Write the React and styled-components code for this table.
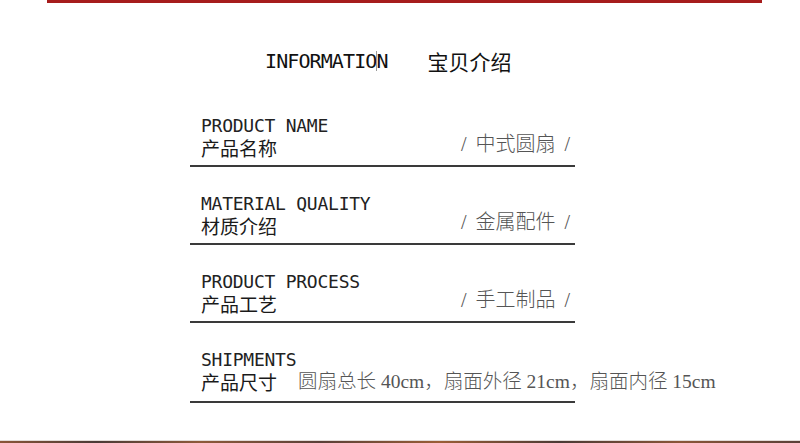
import React from "react";
import styled, { createGlobalStyle } from "styled-components";

const Global = createGlobalStyle`
  html, body { margin: 0; padding: 0; background: #fff; }
  body { overflow: hidden; }
`;

const Page = styled.div`
  width: 800px;
  height: 443px;
  display: flex;
  flex-direction: column;
  background: #fff;
`;

const TopBar = styled.div`
  height: 3px;
  margin: 0 38px 0 47px;
  background: #a61c1c;
`;

const Header = styled.div`
  margin-top: 44px;
  height: 28px;
  padding-left: 265px;
  display: flex;
  align-items: center;
  gap: 40px;
`;

const HeaderEn = styled.span`
  font-family: "DejaVu Sans Mono", "Liberation Mono", monospace;
  font-size: 20px;
  line-height: 28px;
  letter-spacing: -0.9px;
  color: #111;
`;

const Caret = styled.span`
  display: inline-block;
  width: 1px;
  height: 20px;
  margin-right: -1px;
  vertical-align: -3px;
  background: #9a9a9a;
`;

const HeaderCn = styled.span`
  font-family: "Noto Sans CJK SC", sans-serif;
  font-size: 21px;
  line-height: 28px;
  color: #111;
`;

const List = styled.div`
  margin-top: 14px;
  margin-left: 190px;
  width: 385px;
  display: flex;
  flex-direction: column;
`;

const Row = styled.div`
  padding-top: 27px;
  padding-bottom: ${(p) => (p.$last ? 8 : 6)}px;
  border-bottom: 2px solid #3a3a3a;
`;

const EnLabel = styled.div`
  padding-left: 11px;
  font-family: "DejaVu Sans Mono", "Liberation Mono", monospace;
  font-size: 18px;
  line-height: 20px;
  letter-spacing: -0.25px;
  color: #222;
`;

const CnLine = styled.div`
  display: flex;
  align-items: flex-end;
  justify-content: ${(p) => (p.$inline ? "flex-start" : "space-between")};
  gap: ${(p) => (p.$inline ? 21 : 0)}px;
  height: 23px;
  padding: 0 5px 0 11px;
  white-space: nowrap;
`;

const CnLabel = styled.span`
  font-family: "Noto Sans CJK SC", sans-serif;
  font-size: 19px;
  line-height: 23px;
  color: #1a1a1a;
`;

const Value = styled.span`
  align-self: ${(p) => (p.$inline ? "flex-end" : "flex-start")};
  font-family: "Liberation Serif", "Noto Sans CJK SC", serif;
  font-weight: 300;
  font-size: ${(p) => (p.$inline ? 19.5 : 20)}px;
  line-height: ${(p) => (p.$inline ? 23 : 16)}px;
  word-spacing: ${(p) => (p.$inline ? 0 : 4)}px;
  color: #555;
  white-space: pre;
`;

const Footer = styled.div`
  margin-top: auto;
  border-top: 1px solid #e2dcd8;
  height: 2px;
  background: linear-gradient(
    90deg,
    #8a5638 0%,
    #4a3a36 12%,
    #8d5a3a 25%,
    #5a4038 40%,
    #9a5e36 55%,
    #4b3a35 70%,
    #8a5638 85%,
    #5a4038 100%
  );
`;

const rows = [
  { en: "PRODUCT NAME", cn: "产品名称", value: "/ 中式圆扇 /" },
  { en: "MATERIAL QUALITY", cn: "材质介绍", value: "/ 金属配件 /" },
  { en: "PRODUCT PROCESS", cn: "产品工艺", value: "/ 手工制品 /" },
];

export default function App() {
  return (
    <>
      <Global />
      <Page>
        <TopBar />
        <Header>
          <HeaderEn>
            INFORMATIO<Caret />N
          </HeaderEn>
          <HeaderCn>宝贝介绍</HeaderCn>
        </Header>
        <List>
          {rows.map((r) => (
            <Row key={r.en}>
              <EnLabel>{r.en}</EnLabel>
              <CnLine>
                <CnLabel>{r.cn}</CnLabel>
                <Value>{r.value}</Value>
              </CnLine>
            </Row>
          ))}
          <Row $last>
            <EnLabel>SHIPMENTS</EnLabel>
            <CnLine $inline>
              <CnLabel>产品尺寸</CnLabel>
              <Value $inline>圆扇总长 40cm，扇面外径 21cm，扇面内径 15cm</Value>
            </CnLine>
          </Row>
        </List>
        <Footer />
      </Page>
    </>
  );
}
